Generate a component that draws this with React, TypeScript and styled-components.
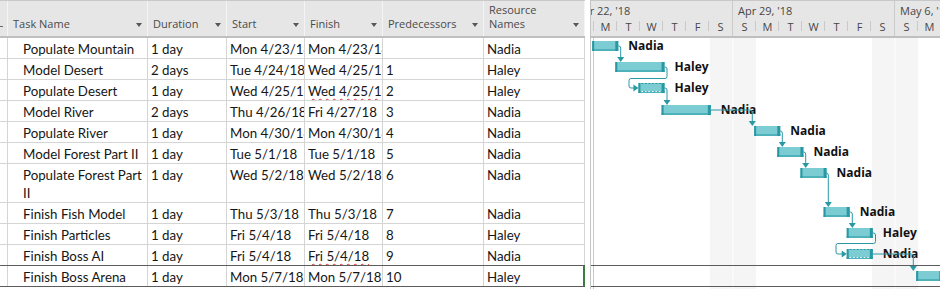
import React from 'react';
import styled, { createGlobalStyle, css } from 'styled-components';

const GlobalStyle = createGlobalStyle`
  html, body { margin: 0; padding: 0; background: #ffffff; }
  body { width: 940px; height: 289px; overflow: hidden; }
  #root { width: 940px; height: 289px; }
`;

const COLS = '8px 140px 79px 78px 78px 101px 101px';
const HEADER_FONT = `'Open Sans', 'Noto Sans', sans-serif`;
const BODY_FONT = `'Lato', 'Open Sans', sans-serif`;
const TEAL = '#2a98a3';

const Screen = styled.div`
  display: flex;
  width: 940px;
  height: 289px;
  overflow: hidden;
  background: #ffffff;
`;

const TablePane = styled.div`
  width: 585px;
  flex: none;
  display: flex;
  flex-direction: column;
`;

const HeaderRow = styled.div`
  display: grid;
  grid-template-columns: ${COLS};
  height: 38px;
  box-sizing: border-box;
  background: #e6e6e6;
  border-top: 1px solid #c8c8c8;
  border-bottom: 2px solid #bfbfbf;
`;

const HeaderCell = styled.div`
  display: flex;
  align-items: flex-end;
  justify-content: space-between;
  box-sizing: border-box;
  padding: 0 5px 5px 5px;
  border-right: 1px solid #f4f4f4;
  font-family: ${HEADER_FONT};
  font-size: 11px;
  line-height: 14px;
  color: #4a4a4a;
  overflow: hidden;
`;

const CornerCell = styled(HeaderCell)`
  padding: 0 0 9px 0;
  justify-content: flex-start;
`;

const Dash = styled.span`
  display: block;
  width: 3px;
  height: 1px;
  background: #666;
`;

const HeaderLabel = styled.span`
  display: block;
`;

const Arrow = styled.span`
  flex: none;
  width: 0;
  height: 0;
  margin: 0 0 4px 4px;
  border-left: 3.5px solid transparent;
  border-right: 3.5px solid transparent;
  border-top: 4px solid #575757;
`;

const Row = styled.div<{ $tall?: boolean; $selected?: boolean }>`
  display: grid;
  grid-template-columns: ${COLS};
  height: ${(p) => (p.$tall ? 39 : 21)}px;
  box-sizing: border-box;
  border-bottom: 1px solid #d5d5d5;
  ${(p) =>
    p.$selected &&
    css`
      margin-top: -1px;
      height: 22px;
      border-top: 1px solid #5c5c5c;
      border-bottom: 1px solid #5c5c5c;
    `}
`;

const Cell = styled.div<{ $indent?: boolean; $active?: boolean }>`
  box-sizing: border-box;
  border-right: ${(p) => (p.$active ? '2px solid #3a7d3e' : '1px solid #d5d5d5')};
  padding: 2px 0 0 ${(p) => (p.$indent ? 15 : 3)}px;
  overflow: hidden;
  white-space: ${(p) => (p.$indent ? 'normal' : 'nowrap')};
  font-family: ${BODY_FONT};
  font-size: 13.3px;
  line-height: 18px;
  color: #161616;
`;

const Squiggle = styled.span`
  text-decoration: underline wavy #e2302b;
  text-decoration-thickness: 1px;
  text-decoration-skip-ink: none;
  text-underline-offset: 2px;
`;

const Splitter = styled.div`
  width: 5px;
  flex: none;
  background: #ffffff;
  border-right: 1px solid #c4c4c4;
`;

const ChartPane = styled.div`
  flex: 1;
  display: flex;
  flex-direction: column;
  overflow: hidden;
`;

const ChartHeader = styled.div`
  height: 38px;
  flex: none;
  box-sizing: border-box;
  background: #e6e6e6;
  border-top: 1px solid #c8c8c8;
  border-bottom: 2px solid #bfbfbf;
  display: flex;
  overflow: hidden;
`;

const WeekStrip = styled.div`
  display: flex;
  margin-left: -20px;
`;

const Week = styled.div`
  width: 162px;
  flex: none;
  box-sizing: border-box;
  border-right: 1px solid #cbcbcb;
  display: flex;
  flex-direction: column;
`;

const WeekLabel = styled.div`
  height: 18px;
  padding-left: 5px;
  font-family: ${HEADER_FONT};
  font-size: 11px;
  line-height: 19px;
  color: #474747;
  white-space: nowrap;
`;

const DaysRow = styled.div`
  display: flex;
  height: 17px;
`;

const Day = styled.div<{ $last?: boolean }>`
  flex: 1;
  position: relative;
  text-align: center;
  font-family: ${HEADER_FONT};
  font-size: 11px;
  line-height: 16px;
  color: #474747;
  &::after {
    content: '';
    display: ${(p) => (p.$last ? 'none' : 'block')};
    position: absolute;
    right: 0;
    top: 2px;
    height: 10px;
    width: 1px;
    background: #c9c9c9;
  }
`;

const ChartBody = styled.div`
  position: relative;
  flex: 1;
`;

const ChartCanvas = styled.svg`
  position: absolute;
  left: 0;
  top: 0;
  overflow: visible;
`;

const ChartRow = styled.div<{ $tall?: boolean; $selected?: boolean }>`
  position: relative;
  box-sizing: border-box;
  height: ${(p) => (p.$tall ? 39 : 21)}px;
  ${(p) =>
    p.$selected &&
    css`
      margin-top: -1px;
      height: 22px;
      border-top: 1px solid #5c5c5c;
      border-bottom: 1px solid #5c5c5c;
    `}
`;

type Task = {
  name: string;
  dur: string;
  start: string;
  finish: string;
  pred: string;
  res: string;
  squiggle?: boolean;
  tall?: boolean;
  selected?: boolean;
};

const tasks: Task[] = [
  { name: 'Populate Mountain', dur: '1 day', start: 'Mon 4/23/18', finish: 'Mon 4/23/18', pred: '', res: 'Nadia' },
  { name: 'Model Desert', dur: '2 days', start: 'Tue 4/24/18', finish: 'Wed 4/25/18', pred: '1', res: 'Haley' },
  { name: 'Populate Desert', dur: '1 day', start: 'Wed 4/25/18', finish: 'Wed 4/25/18', pred: '2', res: 'Haley', squiggle: true },
  { name: 'Model River', dur: '2 days', start: 'Thu 4/26/18', finish: 'Fri 4/27/18', pred: '3', res: 'Nadia' },
  { name: 'Populate River', dur: '1 day', start: 'Mon 4/30/18', finish: 'Mon 4/30/18', pred: '4', res: 'Nadia' },
  { name: 'Model Forest Part II', dur: '1 day', start: 'Tue 5/1/18', finish: 'Tue 5/1/18', pred: '5', res: 'Nadia' },
  { name: 'Populate Forest Part II', dur: '1 day', start: 'Wed 5/2/18', finish: 'Wed 5/2/18', pred: '6', res: 'Nadia', tall: true },
  { name: 'Finish Fish Model', dur: '1 day', start: 'Thu 5/3/18', finish: 'Thu 5/3/18', pred: '7', res: 'Nadia' },
  { name: 'Finish Particles', dur: '1 day', start: 'Fri 5/4/18', finish: 'Fri 5/4/18', pred: '8', res: 'Haley' },
  { name: 'Finish Boss AI', dur: '1 day', start: 'Fri 5/4/18', finish: 'Fri 5/4/18', pred: '9', res: 'Nadia', squiggle: true },
  { name: 'Finish Boss Arena', dur: '1 day', start: 'Mon 5/7/18', finish: 'Mon 5/7/18', pred: '10', res: 'Haley', selected: true },
];

const headers = ['Task Name', 'Duration', 'Start', 'Finish', 'Predecessors', 'Resource Names'];

const weeks = [{ label: "Apr 22, '18" }, { label: "Apr 29, '18" }, { label: "May 6, '18" }];
const dayLetters = ['S', 'M', 'T', 'W', 'T', 'F', 'S'];

// chart geometry in page coordinates; chart body origin = (591, 38)
const OX = 591;
const OY = 38;
const DW = 162 / 7;
const dayStart = (i: number) => 571 + i * DW;

type Bar = { day: number; days: number; top: number; dotted?: boolean; label: string };

const bars: Bar[] = [
  { day: 1, days: 1, top: 41, label: 'Nadia' },
  { day: 2, days: 2, top: 62, label: 'Haley' },
  { day: 3, days: 1, top: 83, dotted: true, label: 'Haley' },
  { day: 4, days: 2, top: 105, label: 'Nadia' },
  { day: 8, days: 1, top: 126, label: 'Nadia' },
  { day: 9, days: 1, top: 147, label: 'Nadia' },
  { day: 10, days: 1, top: 168, label: 'Nadia' },
  { day: 11, days: 1, top: 207, label: 'Nadia' },
  { day: 12, days: 1, top: 228, label: 'Haley' },
  { day: 12, days: 1, top: 249, dotted: true, label: 'Nadia' },
  { day: 15, days: 1, top: 271, label: '' },
];

const BH = 10;

const downConn = (x0: number, y0: number, xv: number, yTop: number) => {
  const path = `M${x0} ${y0} H${xv - 2} Q${xv} ${y0} ${xv} ${y0 + 2} V${yTop - 4}`;
  const arrow = `${xv - 3.5},${yTop - 5} ${xv + 3.5},${yTop - 5} ${xv},${yTop}`;
  return { path, arrow };
};

const loopConn = (x0: number, y0: number, xr: number, ym: number, xl: number, y1: number, x1: number) => {
  const path =
    `M${x0} ${y0} H${xr - 2} Q${xr} ${y0} ${xr} ${y0 + 2} V${ym - 2} Q${xr} ${ym} ${xr - 2} ${ym} ` +
    `H${xl + 2} Q${xl} ${ym} ${xl} ${ym + 2} V${y1 - 2} Q${xl} ${y1} ${xl + 2} ${y1} H${x1 - 4}`;
  const arrow = `${x1 - 5},${y1 - 3.5} ${x1 - 5},${y1 + 3.5} ${x1},${y1}`;
  return { path, arrow };
};

const barX = (b: Bar) => dayStart(b.day) - 2;
const barEnd = (b: Bar) => dayStart(b.day + b.days) + 1;
const cy = (b: Bar) => b.top + BH / 2;

const connectors = [
  downConn(barEnd(bars[0]), cy(bars[0]), 620.7, bars[1].top),
  loopConn(barEnd(bars[1]), cy(bars[1]), 667, 78.5, 629, cy(bars[2]), barX(bars[2])),
  downConn(barEnd(bars[2]), cy(bars[2]), 667, bars[3].top),
  downConn(barEnd(bars[3]), cy(bars[3]), 752.3, bars[4].top),
  downConn(barEnd(bars[4]), cy(bars[4]), 782.3, bars[5].top),
  downConn(barEnd(bars[5]), cy(bars[5]), 805.7, bars[6].top),
  downConn(barEnd(bars[6]), cy(bars[6]), 828.3, bars[7].top),
  downConn(barEnd(bars[7]), cy(bars[7]), 852.3, bars[8].top),
  loopConn(barEnd(bars[8]), cy(bars[8]), 875.5, 243.5, 836, cy(bars[9]), barX(bars[9])),
  downConn(barEnd(bars[9]), cy(bars[9]), 913.3, bars[10].top),
];

const weekendDays = [6, 7, 13, 14];

const GanttBar: React.FC<{ bar: Bar }> = ({ bar }) => {
  const x = barX(bar);
  const w = barEnd(bar) - x;
  const y = bar.top;
  return (
    <g>
      <rect x={x} y={y} width={w} height={BH} fill="#7bccd3" />
      <rect x={x} y={y + BH - 2} width={w} height={2} fill="#4fb1ba" />
      <rect x={x} y={y} width={2} height={BH} fill={TEAL} />
      <rect x={x + w - 3} y={y} width={3} height={BH} fill={TEAL} />
      {bar.dotted && (
        <>
          <line x1={x + 3} x2={x + w - 3} y1={y + 0.5} y2={y + 0.5} stroke={TEAL} strokeWidth={1} strokeDasharray="2 1.5" />
          <line x1={x + 3} x2={x + w - 3} y1={y + BH - 1.5} y2={y + BH - 1.5} stroke="#ffffff" strokeWidth={1} strokeDasharray="1.5 2" />
        </>
      )}
    </g>
  );
};

const App: React.FC = () => {
  return (
    <>
      <GlobalStyle />
      <Screen>
        <TablePane>
          <HeaderRow>
            <CornerCell>
              <Dash />
            </CornerCell>
            {headers.map((h) => (
              <HeaderCell key={h}>
                <HeaderLabel>
                  {h === 'Resource Names' ? (
                    <>
                      Resource
                      <br />
                      Names
                    </>
                  ) : (
                    h
                  )}
                </HeaderLabel>
                <Arrow />
              </HeaderCell>
            ))}
          </HeaderRow>
          {tasks.map((t) => (
            <Row key={t.name} $tall={t.tall} $selected={t.selected}>
              <Cell />
              <Cell $indent>{t.name}</Cell>
              <Cell>{t.dur}</Cell>
              <Cell>{t.start}</Cell>
              <Cell>{t.squiggle ? <Squiggle>{t.finish}</Squiggle> : t.finish}</Cell>
              <Cell>{t.pred}</Cell>
              <Cell $active={t.selected}>{t.res}</Cell>
            </Row>
          ))}
        </TablePane>
        <Splitter />
        <ChartPane>
          <ChartHeader>
            <WeekStrip>
              {weeks.map((w) => (
                <Week key={w.label}>
                  <WeekLabel>{w.label}</WeekLabel>
                  <DaysRow>
                    {dayLetters.map((d, i) => (
                      <Day key={i} $last={i === 6}>
                        {d}
                      </Day>
                    ))}
                  </DaysRow>
                </Week>
              ))}
            </WeekStrip>
          </ChartHeader>
          <ChartBody>
            <ChartCanvas width={349} height={251}>
              <g transform={`translate(${-OX} ${-OY})`}>
                {weekendDays.map((d) => (
                  <rect
                    key={d}
                    x={dayStart(d) + (d % 7 === 0 ? 0.5 : 0)}
                    y={OY}
                    width={DW - 0.5}
                    height={251}
                    fill="#f5f5f5"
                  />
                ))}
                <line x1={593.5} x2={593.5} y1={OY} y2={OY + 251} stroke="#b3dcae" strokeWidth={1} />
                {bars.map((b, i) => (
                  <GanttBar key={i} bar={b} />
                ))}
                {bars.map((b, i) =>
                  b.label ? (
                    <text
                      key={`l${i}`}
                      x={barEnd(b) + 10}
                      y={b.top + 8.5}
                      fontFamily="'Open Sans', 'Noto Sans', sans-serif"
                      fontWeight={700}
                      fontSize={12}
                      fill="#111111"
                    >
                      {b.label}
                    </text>
                  ) : null
                )}
                {connectors.map((c, i) => (
                  <g key={`c${i}`}>
                    <path d={c.path} fill="none" stroke={TEAL} strokeWidth={1} />
                    <polygon points={c.arrow} fill={TEAL} />
                  </g>
                ))}
              </g>
            </ChartCanvas>
            {tasks.map((t) => (
              <ChartRow key={t.name} $tall={t.tall} $selected={t.selected} />
            ))}
          </ChartBody>
        </ChartPane>
      </Screen>
    </>
  );
};

export default App;
